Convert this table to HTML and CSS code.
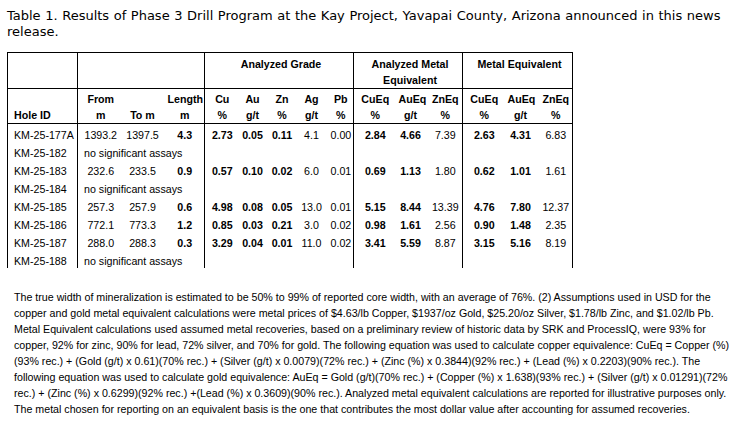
FILE: index.html
```html
<!DOCTYPE html>
<html lang="en">
<head>
<meta charset="utf-8">
<title>Table 1. Results of Phase 3 Drill Program</title>
<link rel="stylesheet" href="styles.css">
</head>
<body>
<div class="page">
  <p class="title">Table 1. Results of Phase 3 Drill Program at the Kay Project, Yavapai County, Arizona announced in this news release.</p>
  <table class="results">
    <colgroup>
      <col class="w70"><col class="w42"><col class="w42"><col class="w43">
      <col class="w31"><col class="w30"><col class="w29"><col class="w30"><col class="w29">
      <col class="w39"><col class="w32"><col class="w38">
      <col class="w39"><col class="w34"><col class="w37">
    </colgroup>
    <thead>
      <tr class="h1">
        <th class="gr"></th>
        <th class="gr" colspan="3"></th>
        <th class="gr" colspan="5">Analyzed Grade</th>
        <th class="gr" colspan="3">Analyzed Metal Equivalent</th>
        <th colspan="3">Metal Equivalent</th>
      </tr>
      <tr class="h2">
        <th class="gr left">Hole ID</th>
        <th>From<br>m</th>
        <th>To m</th>
        <th class="gr">Length<br>m</th>
        <th>Cu<br>%</th>
        <th>Au<br>g/t</th>
        <th>Zn<br>%</th>
        <th>Ag<br>g/t</th>
        <th class="gr">Pb<br>%</th>
        <th>CuEq<br>%</th>
        <th>AuEq<br>g/t</th>
        <th class="gr">ZnEq<br>%</th>
        <th>CuEq<br>%</th>
        <th>AuEq<br>g/t</th>
        <th>ZnEq<br>%</th>
      </tr>
    </thead>
    <tbody>
      <tr>
        <td class="gr left">KM-25-177A</td>
        <td>1393.2</td><td>1397.5</td><td class="gr b">4.3</td>
        <td class="b">2.73</td><td class="b">0.05</td><td class="b">0.11</td><td>4.1</td><td class="gr">0.00</td>
        <td class="b">2.84</td><td class="b">4.66</td><td class="gr">7.39</td>
        <td class="b">2.63</td><td class="b">4.31</td><td>6.83</td>
      </tr>
      <tr>
        <td class="gr left">KM-25-182</td>
        <td class="gr left" colspan="3">no significant assays</td>
        <td class="gr" colspan="5"></td><td class="gr" colspan="3"></td><td colspan="3"></td>
      </tr>
      <tr>
        <td class="gr left">KM-25-183</td>
        <td>232.6</td><td>233.5</td><td class="gr b">0.9</td>
        <td class="b">0.57</td><td class="b">0.10</td><td class="b">0.02</td><td>6.0</td><td class="gr">0.01</td>
        <td class="b">0.69</td><td class="b">1.13</td><td class="gr">1.80</td>
        <td class="b">0.62</td><td class="b">1.01</td><td>1.61</td>
      </tr>
      <tr>
        <td class="gr left">KM-25-184</td>
        <td class="gr left" colspan="3">no significant assays</td>
        <td class="gr" colspan="5"></td><td class="gr" colspan="3"></td><td colspan="3"></td>
      </tr>
      <tr>
        <td class="gr left">KM-25-185</td>
        <td>257.3</td><td>257.9</td><td class="gr b">0.6</td>
        <td class="b">4.98</td><td class="b">0.08</td><td class="b">0.05</td><td>13.0</td><td class="gr">0.01</td>
        <td class="b">5.15</td><td class="b">8.44</td><td class="gr">13.39</td>
        <td class="b">4.76</td><td class="b">7.80</td><td>12.37</td>
      </tr>
      <tr>
        <td class="gr left">KM-25-186</td>
        <td>772.1</td><td>773.3</td><td class="gr b">1.2</td>
        <td class="b">0.85</td><td class="b">0.03</td><td class="b">0.21</td><td>3.0</td><td class="gr">0.02</td>
        <td class="b">0.98</td><td class="b">1.61</td><td class="gr">2.56</td>
        <td class="b">0.90</td><td class="b">1.48</td><td>2.35</td>
      </tr>
      <tr>
        <td class="gr left">KM-25-187</td>
        <td>288.0</td><td>288.3</td><td class="gr b">0.3</td>
        <td class="b">3.29</td><td class="b">0.04</td><td class="b">0.01</td><td>11.0</td><td class="gr">0.02</td>
        <td class="b">3.41</td><td class="b">5.59</td><td class="gr">8.87</td>
        <td class="b">3.15</td><td class="b">5.16</td><td>8.19</td>
      </tr>
      <tr>
        <td class="gr left">KM-25-188</td>
        <td class="gr left" colspan="3">no significant assays</td>
        <td class="gr" colspan="5"></td><td class="gr" colspan="3"></td><td colspan="3"></td>
      </tr>
    </tbody>
  </table>
  <p class="notes">The true width of mineralization is estimated to be 50% to 99% of reported core width, with an average of 76%. (2) Assumptions used in USD for the copper and gold metal equivalent calculations were metal prices of $4.63/lb Copper, $1937/oz Gold, $25.20/oz Silver, $1.78/lb Zinc, and $1.02/lb Pb. Metal Equivalent calculations used assumed metal recoveries, based on a preliminary review of historic data by SRK and ProcessIQ, were 93% for copper, 92% for zinc, 90% for lead, 72% silver, and 70% for gold. The following equation was used to calculate copper equivalence: CuEq = Copper (%) (93% rec.) + (Gold (g/t) x 0.61)(70% rec.) + (Silver (g/t) x 0.0079)(72% rec.) + (Zinc (%) x 0.3844)(92% rec.) + (Lead (%) x 0.2203)(90% rec.). The following equation was used to calculate gold equivalence: AuEq = Gold (g/t)(70% rec.) + (Copper (%) x 1.638)(93% rec.) + (Silver (g/t) x 0.01291)(72% rec.) + (Zinc (%) x 0.6299)(92% rec.) +(Lead (%) x 0.3609)(90% rec.). Analyzed metal equivalent calculations are reported for illustrative purposes only. The metal chosen for reporting on an equivalent basis is the one that contributes the most dollar value after accounting for assumed recoveries.</p>
</div>
</body>
</html>
```

FILE: styles.css
```css
html, body {
  margin: 0;
  padding: 0;
  background: #fff;
  color: #000;
}

.page {
  padding: 8px 8px 0 7px;
}

.title {
  margin: 0;
  font-family: "DejaVu Sans", Verdana, sans-serif;
  font-size: 13px;
  line-height: 16px;
  word-spacing: 0.45px;
  color: #000;
}

.results {
  margin-top: 12px;
  border-collapse: collapse;
  table-layout: fixed;
  width: 565px;
  border-top: 1px solid #000;
  border-left: 1px solid #000;
  border-right: 1px solid #000;
  font-family: "Liberation Sans", Arial, sans-serif;
  font-size: 10.667px;
  color: #000;
}

.w70 { width: 70px; }
.w43 { width: 43px; }
.w42 { width: 42px; }
.w39 { width: 39px; }
.w38 { width: 38px; }
.w37 { width: 37px; }
.w34 { width: 34px; }
.w32 { width: 32px; }
.w31 { width: 31px; }
.w30 { width: 30px; }
.w29 { width: 29px; }

.results th,
.results td {
  padding: 4px 2px 0 6px;
  text-align: center;
  white-space: nowrap;
}

.results th {
  font-weight: bold;
  line-height: 16px;
  border-bottom: 1px solid #000;
}

.results .h1 th {
  padding-top: 3px;
  vertical-align: top;
  white-space: normal;
  height: 32px;
}

.results .h2 th {
  padding-top: 2px;
  vertical-align: bottom;
}

.results td {
  line-height: 14px;
  height: 14px;
  vertical-align: bottom;
  font-weight: normal;
}

.results .left {
  text-align: left;
}

.results .gr {
  border-right: 1px solid #000;
}

.results td.b {
  font-weight: bold;
}

.notes {
  margin: 21px 0 0;
  padding-left: 7px;
  font-family: "Liberation Sans", Arial, sans-serif;
  font-size: 10.667px;
  line-height: 16px;
  color: #000;
}
```
